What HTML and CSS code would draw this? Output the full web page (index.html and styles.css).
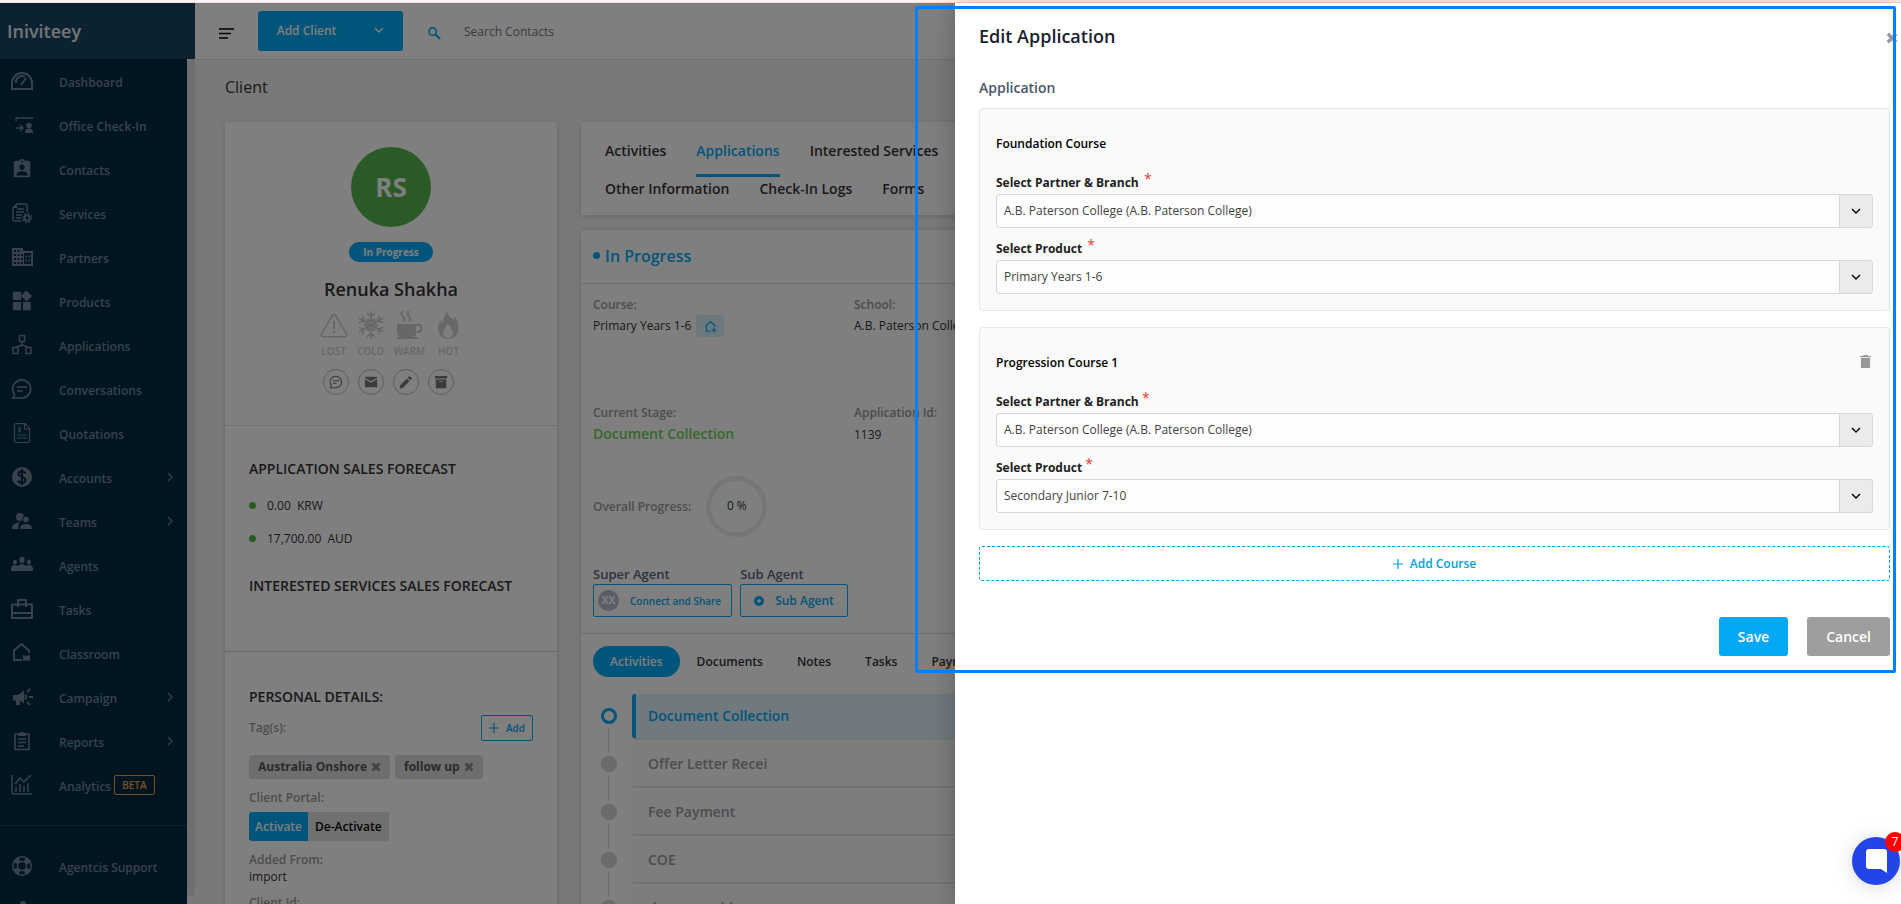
FILE: index.html
```html
<!DOCTYPE html>
<html lang="en">
<head>
  <meta charset="UTF-8">
  <title>Edit Application - Client</title>
  <meta name="viewport" content="width=device-width, initial-scale=1.0">
  <link rel="stylesheet" href="styles.css">
</head>
<body>
  <!-- icon sprite -->
  <svg class="sprite" aria-hidden="true">
    <symbol id="i-dashboard" viewBox="0 0 22 22"><path d="M1 19v-6a10 10 0 0 1 20 0v6zM5 13a6 6 0 0 1 9-6M10 15l5-7" fill="none" stroke="currentColor" stroke-width="2"/></symbol>
    <symbol id="i-checkin" viewBox="0 0 22 22"><path d="M5 7V4h17M5 14h7M9 11l3 3-3 3" fill="none" stroke="currentColor" stroke-width="1.3"/><circle cx="18" cy="11.500" r="2.700" fill="currentColor"/><path d="M14 19c0-3 1.500-4.500 4-4.500s4 1.500 4 4.500z" fill="currentColor"/></symbol>
    <symbol id="i-contacts" viewBox="0 0 24 24"><path fill="currentColor" fill-rule="evenodd" d="M19 3h-4.180C14.400 1.840 13.300 1 12 1c-1.300 0-2.400.84-2.820 2H5c-1.100 0-2 .9-2 2v14c0 1.100.9 2 2 2h14c1.100 0 2-.9 2-2V5c0-1.100-.9-2-2-2zm-7 0c.55 0 1 .45 1 1s-.45 1-1 1-1-.45-1-1 .45-1 1-1zm0 4c1.660 0 3 1.340 3 3s-1.340 3-3 3-3-1.340-3-3 1.340-3 3-3zm6 12H6v-1.400c0-2 4-3.100 6-3.100s6 1.100 6 3.100V19z"/></symbol>
    <symbol id="i-services" viewBox="0 0 22 22"><path d="M10 19H4q-2 0-2-2V6l4-4h8q2 0 2 2v6M5 10h8M5 13h6M5 16h5M6 7h7" fill="none" stroke="currentColor" stroke-width="1.500"/><path d="M2 6l4-4v4z" fill="currentColor"/><circle cx="16" cy="16" r="2.600" fill="none" stroke="currentColor" stroke-width="1.800"/><circle cx="16" cy="16" r="4.400" fill="none" stroke="currentColor" stroke-width="1.600" stroke-dasharray="1.700 1.750"/></symbol>
    <symbol id="i-partners" viewBox="0 0 22 22"><path fill="currentColor" fill-rule="evenodd" d="M1 2h11v3h10v15H1zM3 4v2h2V4zm3.500 0v2h2V4zM3 8v2h2V8zm3.500 0v2h2V8zM3 12v2h2v-2zm3.500 0v2h2v-2zM3 16v2h2v-2zm3.500 0v2h2v-2zM10 8v2h2V8zm0 4v2h2v-2zm0 4v2h2v-2zM13 7v11h7V7zm1.500 2.500h1.500v2h-1.500zm0 4h1.500v2h-1.500zm3-4h1.500v2h-1.500zm0 4h1.500v2h-1.500z"/></symbol>
    <symbol id="i-products" viewBox="0 0 24 24"><path fill="currentColor" d="M13 13v9h8.500v-9zM2 22h9v-9H2zM2 2v9h9V2zm14.500-1.500L11 6.500l6 6 6-6z"/></symbol>
    <symbol id="i-applications" viewBox="0 0 22 22"><path d="M8.500 1.500h5v6h-5zM2 13.500h5v6H2zM15 13.500h5v6h-5zM11 7.500v4.500M4.500 13.500L11 11l6.500 2.500" fill="none" stroke="currentColor" stroke-width="1.500" stroke-linejoin="round"/></symbol>
    <symbol id="i-chat" viewBox="0 0 22 22"><path d="M2 20l1.500-3.500A9 9 0 1 1 11 20zM6 9h10M6 13h6" fill="none" stroke="currentColor" stroke-width="1.700"/></symbol>
    <symbol id="i-quotation" viewBox="0 0 22 22"><path d="M5 1.700h9l4.500 4.500V19q0 1.500-1.500 1.500H5q-1.500 0-1.500-1.500V3.200q0-1.500 1.500-1.500zM13.500 2v5h5M6 13h10M6 16h10" fill="none" stroke="currentColor" stroke-width="1.200"/><path d="M10 6Q7 5 7.300 6.800T10 8.500Q9.500 10.500 7 9.500M8.700 4.800v6" fill="none" stroke="currentColor" stroke-width=".9"/></symbol>
    <symbol id="i-accounts" viewBox="0 0 22 22"><circle cx="11" cy="11" r="10" fill="currentColor"/><path d="M14.500 7.500C13 4.500 7.500 5 7.500 8s7 2.500 7 6-6 3.700-7.300.5M11 3v16" fill="none" stroke="#022b42" stroke-width="2"/></symbol>
    <symbol id="i-teams" viewBox="0 0 22 22"><g fill="currentColor"><circle cx="9" cy="7" r="4"/><path d="M1 19v-2q1-4 8-5-2 2-1.500 7z"/><circle cx="15" cy="9.500" r="3.400" stroke="#022b42"/><path d="M9 19q0-5 6-5t6 5z"/></g></symbol>
    <symbol id="i-agents" viewBox="0 0 22 22"><g fill="currentColor"><ellipse cx="11" cy="6" rx="2.600" ry="3.200"/><ellipse cx="4" cy="8" rx="2" ry="2.600"/><ellipse cx="18" cy="8" rx="2" ry="2.600"/><path d="M0 17v-3q1-3 4-3 2 0 3 1 2-2 4-2t4 2q1-1 3-1 3 0 4 3v3z"/></g></symbol>
    <symbol id="i-tasks" viewBox="0 0 22 22"><path d="M1 6.500h20V20H1zM1 15h20M7 9V2h8v7" fill="none" stroke="currentColor" stroke-width="2" stroke-linejoin="round"/></symbol>
    <symbol id="i-classroom" viewBox="0 0 22 22"><path d="M11 18H3V8.500L10.500 2 18 8.500V11" fill="none" stroke="currentColor" stroke-width="1.800"/><path d="M12 13l3.500 1 3.500-1v5.500H12z" fill="currentColor"/></symbol>
    <symbol id="i-campaign" viewBox="0 0 22 22"><path d="M2 9h5l6-4.500v13L9 14.500V19H5v-4.500H2z" fill="currentColor"/><path d="M14 8.500q2 2.500 0 5M16 6l3-3M18 11h4M16 16l3 3" fill="none" stroke="currentColor" stroke-width="1.800"/></symbol>
    <symbol id="i-reports" viewBox="0 0 22 22"><path d="M4 4h14v15.500H4zM7 9h8M7 12.500h8M7 16h6" fill="none" stroke="currentColor" stroke-width="1.600" stroke-linejoin="round"/><path d="M7 3h2q2-3 4 0h2v3H7z" fill="currentColor"/></symbol>
    <symbol id="i-analytics" viewBox="0 0 22 22"><path d="M1 1v17q0 2 2 2h18M5 18v-5M9 18v-8M13 18v-6M17 18V9M4 10l5-6 4 4 7-7" fill="none" stroke="currentColor" stroke-width="1.500"/></symbol>
    <symbol id="i-support" viewBox="0 0 22 22"><circle cx="11" cy="11" r="7" fill="none" stroke="currentColor" stroke-width="5.500" stroke-dasharray="5.500 5.500" stroke-dashoffset="-2.700"/><g fill="none" stroke="currentColor" stroke-width="1.500"><circle cx="11" cy="11" r="9.200"/><circle cx="11" cy="11" r="4.600"/></g></symbol>
    <symbol id="i-bell" viewBox="0 0 22 22"><path d="M9 5q0-3 3-3t3 3q4 2 4 7v5H5v-5q0-5 4-7z" fill="currentColor"/></symbol>
    <symbol id="i-caret" viewBox="0 0 10 10"><path d="M1 3l4 4 4-4" fill="none" stroke="currentColor" stroke-width="1.400"/></symbol>
    <symbol id="i-right" viewBox="0 0 10 10"><path d="M3 1l4 4-4 4" fill="none" stroke="currentColor" stroke-width="1.200"/></symbol>
    <symbol id="i-close" viewBox="0 0 10 10"><path d="M1.500 1.500l7 7M8.500 1.500l-7 7" stroke="currentColor" stroke-width="2.800"/></symbol>
    <symbol id="i-plus" viewBox="0 0 10 10"><path d="M5 0v10M0 5h10" stroke="currentColor" stroke-width="1.200"/></symbol>
    <symbol id="i-home-plus" viewBox="0 0 22 22"><path d="M11 19H4V9l7-6 7 6v3" fill="none" stroke="currentColor" stroke-width="2"/><path d="M17 13v8M13 17h8" stroke="currentColor" stroke-width="2"/></symbol>
  </svg>

  <div class="notice"></div>

  <div class="app">
    <!-- sidebar -->
    <aside class="sidebar">
      <div class="brand">Iniviteey</div>
      <div class="sidebar-body">
        <nav class="nav">
          <a href="#"><svg><use href="#i-dashboard"/></svg>Dashboard</a>
          <a href="#"><svg><use href="#i-checkin"/></svg>Office Check-In</a>
          <a href="#"><svg><use href="#i-contacts"/></svg>Contacts</a>
          <a href="#"><svg><use href="#i-services"/></svg>Services</a>
          <a href="#"><svg><use href="#i-partners"/></svg>Partners</a>
          <a href="#"><svg><use href="#i-products"/></svg>Products</a>
          <a href="#"><svg><use href="#i-applications"/></svg>Applications</a>
          <a href="#"><svg><use href="#i-chat"/></svg>Conversations</a>
          <a href="#"><svg><use href="#i-quotation"/></svg>Quotations</a>
          <a href="#"><svg><use href="#i-accounts"/></svg>Accounts<svg class="more"><use href="#i-right"/></svg></a>
          <a href="#"><svg><use href="#i-teams"/></svg>Teams<svg class="more"><use href="#i-right"/></svg></a>
          <a href="#"><svg><use href="#i-agents"/></svg>Agents</a>
          <a href="#"><svg><use href="#i-tasks"/></svg>Tasks</a>
          <a href="#"><svg><use href="#i-classroom"/></svg>Classroom</a>
          <a href="#"><svg><use href="#i-campaign"/></svg>Campaign<svg class="more"><use href="#i-right"/></svg></a>
          <a href="#"><svg><use href="#i-reports"/></svg>Reports<svg class="more"><use href="#i-right"/></svg></a>
          <a href="#"><svg><use href="#i-analytics"/></svg>Analytics<span class="beta">BETA</span></a>
          <hr>
          <a href="#"><svg><use href="#i-support"/></svg>Agentcis Support</a>
          <a href="#" aria-label="Notifications"><svg><use href="#i-bell"/></svg></a>
        </nav>
        <div class="scrollbar"><div class="scrollbar-thumb"></div></div>
      </div>
    </aside>

    <!-- main -->
    <main class="main">
      <header class="topbar">
        <button type="button" class="menu-btn" aria-label="Menu">
          <svg viewBox="0 0 15 11"><path d="M0 1h15M0 5.500h12M0 10h9" stroke="#000" stroke-width="1.600"/></svg>
        </button>
        <button type="button" class="add-client">Add Client <svg><use href="#i-caret"/></svg></button>
        <label class="search">
          <svg viewBox="0 0 14 14"><circle cx="5" cy="5" r="4" fill="none" stroke="currentColor" stroke-width="1.800"/><path d="M8 8l5 5" stroke="currentColor" stroke-width="2.200"/></svg>
          <input type="text" placeholder="Search Contacts" aria-label="Search Contacts">
        </label>
      </header>

      <h1 class="page-title">Client</h1>

      <div class="columns">
        <section class="card profile">
          <div class="profile-head">
            <div class="avatar">RS</div>
            <span class="status">In Progress</span>
            <h2>Renuka Shakha</h2>
            <div class="ratings">
              <div><svg viewBox="0 0 28 28"><path d="M14 3.500q1 0 1.600 1L26.500 23q1 2.700-1.500 2.700H3Q.5 25.700 1.500 23L12.400 4.500q.6-1 1.600-1z" fill="none" stroke="currentColor" stroke-width="1.600"/><path d="M14 10v8M14 20v2" stroke="currentColor" stroke-width="2"/></svg>LOST</div>
              <div><svg viewBox="0 0 28 28"><g id="arm" fill="none" stroke="currentColor" stroke-width="1.700"><path d="M14 0v28M10 2l4 4 4-4M10 26l4-4 4 4M11 8l3 3 3-3M11 20l3-3 3 3"/></g><use href="#arm" transform="rotate(60 14 14)"/><use href="#arm" transform="rotate(120 14 14)"/></svg>COLD</div>
              <div><svg viewBox="0 0 28 28"><path d="M2 13h19v9q0 4-4 4H7q-5 0-5-5zM1 26h22v2H3z" fill="currentColor"/><path d="M21 14h2q3.500 0 3.500 3.500T22 21M8 0q-3 3 0 5.500T8 10M14 0q-3 3 0 5.500T14 10" fill="none" stroke="currentColor" stroke-width="2.200"/></svg>WARM</div>
              <div><svg viewBox="0 0 28 28"><path fill="currentColor" fill-rule="evenodd" d="M13 0q0 5 7 9l1-4q4 8 3 15-2 8-10 8T4 19q0-7 3-10l1 4Q9 7 13 0zM14 13q-6 7-5 11 2 3 5 3t5-3q1-4-5-11z"/></svg>HOT</div>
            </div>
            <div class="actions">
              <button type="button" aria-label="Message"><svg><use href="#i-chat"/></svg></button>
              <button type="button" aria-label="Email"><svg viewBox="0 0 16 16"><path d="M1 2h14v12H1z" fill="currentColor"/><path d="M1 4l7 4 7-4" fill="none" stroke="#fff" stroke-width="1.300"/></svg></button>
              <button type="button" aria-label="Edit"><svg viewBox="0 0 16 16"><path d="M1 12v3h3l8-8-3-3zM10 3l3 3 2-2-3-3z" fill="currentColor"/></svg></button>
              <button type="button" aria-label="Archive"><svg viewBox="0 0 16 16"><path d="M1 1h14v3H1zM2 5h12v10H2zM6 7v1h4V7z" fill="currentColor" fill-rule="evenodd"/></svg></button>
            </div>
          </div>

          <div class="forecast">
            <h3>APPLICATION SALES FORECAST</h3>
            <ul>
              <li>0.00 &nbsp;KRW</li>
              <li>17,700.00 &nbsp;AUD</li>
            </ul>
            <h3>INTERESTED SERVICES SALES FORECAST</h3>
          </div>

          <div class="personal">
            <h3>PERSONAL DETAILS:</h3>
            <div class="tags-head">
              <span class="muted">Tag(s):</span>
              <button type="button" class="add-tag"><svg><use href="#i-plus"/></svg>Add</button>
            </div>
            <div class="tags">
              <span>Australia Onshore <svg><use href="#i-close"/></svg></span>
              <span>follow up <svg><use href="#i-close"/></svg></span>
            </div>
            <div class="muted">Client Portal:</div>
            <div class="portal">
              <button type="button" class="on">Activate</button><button type="button">De-Activate</button>
            </div>
            <div class="muted">Added From:</div>
            <div class="value">import</div>
            <div class="muted client-id">Client Id:</div>
          </div>
        </section>

        <div class="detail">
          <nav class="card tabs">
            <div class="tabs-row">
              <a href="#">Activities</a>
              <a href="#" class="active">Applications</a>
              <a href="#">Interested Services</a>
            </div>
            <div class="tabs-row">
              <a href="#">Other Information</a>
              <a href="#">Check-In Logs</a>
              <a href="#">Forms</a>
            </div>
          </nav>

          <section class="card application">
            <h2 class="app-status">In Progress</h2>
            <div class="app-body">
              <div class="facts">
                <div>
                  <div class="muted">Course:</div>
                  <div class="course">Primary Years 1-6 <span class="course-tag"><svg><use href="#i-home-plus"/></svg></span></div>
                </div>
                <div>
                  <div class="muted">School:</div>
                  <div class="course">A.B. Paterson College</div>
                </div>
                <div>
                  <div class="muted">Current Stage:</div>
                  <div class="stage-name">Document Collection</div>
                </div>
                <div>
                  <div class="muted">Application Id:</div>
                  <div class="app-id">1139</div>
                </div>
              </div>
              <div class="progress">
                <span class="muted">Overall Progress:</span>
                <div class="ring">0 %</div>
              </div>
              <div class="agents">
                <div>
                  <h4>Super Agent</h4>
                  <button type="button" class="connect"><span class="xx">XX</span>Connect and Share</button>
                </div>
                <div>
                  <h4>Sub Agent</h4>
                  <button type="button" class="sub"><svg viewBox="0 0 10 10"><circle cx="5" cy="5" r="5" fill="currentColor"/><path d="M5 3v4M3 5h4" stroke="#fff" stroke-width="1.300"/></svg>Sub Agent</button>
                </div>
              </div>
            </div>
            <nav class="pills">
              <a href="#" class="active">Activities</a>
              <a href="#">Documents</a>
              <a href="#">Notes</a>
              <a href="#">Tasks</a>
              <a href="#">Payments</a>
            </nav>
            <ol class="stages">
              <li class="current"><span>Document Collection</span></li>
              <li><span>Offer Letter Recei</span></li>
              <li><span>Fee Payment</span></li>
              <li><span>COE</span></li>
              <li><span>document bl</span></li>
            </ol>
          </section>
        </div>
      </div>
    </main>

    <div class="backdrop"></div>

    <!-- edit drawer -->
    <div class="drawer" role="dialog" aria-labelledby="drawerTitle">
      <div class="drawer-head">
        <h2 id="drawerTitle">Edit Application</h2>
        <button type="button" class="drawer-close" aria-label="Close"><svg><use href="#i-close"/></svg></button>
      </div>
      <form>
        <h3>Application</h3>

        <fieldset class="course-box">
          <div class="course-title">Foundation Course</div>
          <div class="field">
            <label for="partner1">Select Partner &amp; Branch <span class="req wide">*</span></label>
            <div class="select">
              <select id="partner1"><option>A.B. Paterson College (A.B. Paterson College)</option></select>
              <span class="arrow"><svg><use href="#i-caret"/></svg></span>
            </div>
          </div>
          <div class="field">
            <label for="product1">Select Product <span class="req wide">*</span></label>
            <div class="select">
              <select id="product1"><option>Primary Years 1-6</option></select>
              <span class="arrow"><svg><use href="#i-caret"/></svg></span>
            </div>
          </div>
        </fieldset>

        <fieldset class="course-box">
          <div class="course-title">Progression Course 1
            <button type="button" class="delete" aria-label="Delete"><svg viewBox="0 0 12 14"><path d="M1 3h10v10q0 1-1 1H2q-1 0-1-1zM0 1h3l1-1h4l1 1h3v1H0z" fill="currentColor"/></svg></button>
          </div>
          <div class="field">
            <label for="partner2">Select Partner &amp; Branch <span class="req">*</span></label>
            <div class="select">
              <select id="partner2"><option>A.B. Paterson College (A.B. Paterson College)</option></select>
              <span class="arrow"><svg><use href="#i-caret"/></svg></span>
            </div>
          </div>
          <div class="field">
            <label for="product2">Select Product <span class="req">*</span></label>
            <div class="select">
              <select id="product2"><option>Secondary Junior 7-10</option></select>
              <span class="arrow"><svg><use href="#i-caret"/></svg></span>
            </div>
          </div>
        </fieldset>

        <button type="button" class="add-course"><svg><use href="#i-plus"/></svg>Add Course</button>

        <div class="form-actions">
          <button type="submit" class="save">Save</button>
          <button type="button" class="cancel">Cancel</button>
        </div>
      </form>
      <div class="focus-frame"></div>
    </div>

    <button type="button" class="chat-btn" aria-label="Open chat">
      <svg viewBox="0 0 21 24"><path d="M3 0h15q3 0 3 3v21l-6-4H3q-3 0-3-3V3q0-3 3-3z" fill="#fff"/></svg>
      <span class="chat-count">7</span>
    </button>
  </div>
</body>
</html>
```
FILE: styles.css
```css
*, *::before, *::after {
  box-sizing: border-box;
}
body {
  margin: 0;
  height: 100vh;
  overflow: hidden;
  display: flex;
  flex-direction: column;
  font-family: "Open Sans", "Noto Sans", sans-serif;
  font-size: 12px;
  line-height: 16px;
  color: #333;
  background: #f3f3f3;
}
h1, h2, h3, h4, ul, ol {
  margin: 0;
  padding: 0;
  list-style: none;
}
h1, h2, h3, h4 {
  font-weight: 600;
}
a {
  color: inherit;
  text-decoration: none;
}
button, input, select {
  font-family: inherit;
  font-size: 12px;
}
button {
  display: flex;
  align-items: center;
  justify-content: center;
  padding: 0;
  border: none;
  background: none;
  cursor: pointer;
}
svg {
  width: 10px;
  height: 10px;
  flex: none;
}
.sprite {
  position: absolute;
  width: 0;
  height: 0;
}
.notice {
  flex: none;
  height: 3px;
  background: #fdf5f3;
  border-bottom: 1px solid #f6dcdf;
}
.app {
  position: relative;
  flex: 1;
  min-height: 0;
  display: flex;
}

/* sidebar */
.sidebar {
  width: 195px;
  flex: none;
  display: flex;
  flex-direction: column;
}
.brand {
  height: 56px;
  flex: none;
  padding: 0 7px;
  background: #184460;
  color: #e6eaed;
  font-size: 18px;
  font-weight: 600;
  line-height: 56px;
}
.sidebar-body {
  flex: 1;
  min-height: 0;
  display: flex;
}
.nav {
  flex: 1;
  overflow: hidden;
  background: #022b42;
}
.nav a {
  display: flex;
  align-items: center;
  height: 44px;
  padding: 4px 0 0 11px;
  font-weight: 600;
  color: #70859a;
}
.nav svg {
  width: 22px;
  height: 22px;
  margin: 0 26px 4px 0;
}
.nav .more {
  width: 10px;
  height: 12px;
  margin: 0 12px 4px auto;
}
.nav hr {
  margin: 18px 0;
  border: none;
  border-top: 1px solid #184460;
}
.beta {
  margin: 0 0 4px 3px;
  padding: 1px 7px;
  border: 1px solid #f0a050;
  border-radius: 2px;
  color: #f0a050;
  font-size: 10px;
}
.scrollbar {
  width: 8px;
  padding-bottom: 8px;
  background: #f3f3f3;
}
.scrollbar-thumb {
  height: 100%;
  border-radius: 4px;
  background: #dcdcdc;
}

/* main */
.main {
  flex: 1;
  min-width: 0;
  overflow: hidden;
}
.topbar {
  height: 57px;
  display: flex;
  align-items: center;
  padding-left: 24px;
  background: #fff;
  border-bottom: 1px solid #e0e0e0;
}
.menu-btn {
  padding-top: 5px;
}
.menu-btn svg {
  width: 15px;
  height: 11px;
}
.add-client {
  width: 145px;
  height: 40px;
  margin: 0 25px 0 24px;
  padding-bottom: 2px;
  border-radius: 3px;
  background: #03a9f4;
  color: #fff;
  font-weight: 600;
  gap: 38px;
}
.search {
  display: flex;
  align-items: center;
  gap: 23px;
  color: #03a9f4;
}
.search svg {
  width: 13px;
  height: 13px;
  margin-top: 4px;
}
.search input {
  border: none;
  outline: none;
  padding: 0;
}
.search input::placeholder {
  color: #757575;
}
.page-title {
  padding: 15px 30px 23px;
  font-size: 16px;
  font-weight: 500;
  line-height: 24px;
  color: #333;
}
.columns {
  display: grid;
  grid-template-columns: 332px 1fr;
  gap: 24px;
  padding: 0 24px 0 30px;
}
.card {
  background: #fff;
  border-radius: 3px;
  box-shadow: 0 1px 6px rgba(0, 0, 0, 0.15);
}
.muted {
  color: #999;
  font-weight: 600;
}

/* profile card */
.profile h3 {
  font-size: 14px;
  line-height: 20px;
}
.profile-head {
  height: 304px;
  padding-top: 25px;
  display: flex;
  flex-direction: column;
  align-items: center;
  border-bottom: 1px solid #e0e0e0;
}
.avatar {
  width: 80px;
  height: 80px;
  border-radius: 50%;
  background: #55b44b;
  color: #fff;
  font-size: 26px;
  font-weight: 700;
  line-height: 80px;
  text-align: center;
}
.status {
  margin: 15px 0;
  padding: 0 14px;
  border-radius: 10px;
  background: #03a9f4;
  color: #fff;
  font-size: 10px;
  font-weight: 700;
  line-height: 20px;
}
.profile-head h2 {
  font-size: 18px;
  line-height: 24px;
}
.ratings {
  display: flex;
  gap: 9px;
  margin-top: 10px;
}
.ratings div {
  display: flex;
  flex-direction: column;
  align-items: center;
  min-width: 28px;
  color: #cfcfcf;
  font-size: 10px;
  font-weight: 600;
}
.ratings svg {
  width: 28px;
  height: 28px;
  margin-bottom: 4px;
}
.actions {
  display: flex;
  gap: 9px;
  margin: 10px 5px 0 0;
}
.actions button {
  width: 26px;
  height: 26px;
  border: 1px solid #bbb;
  border-radius: 50%;
  color: #777;
}
.actions svg {
  width: 14px;
  height: 14px;
}
.forecast {
  height: 226px;
  padding: 33px 24px 0;
  border-bottom: 1px solid #ccc;
}
.forecast li {
  display: flex;
  align-items: center;
  gap: 11px;
  height: 33px;
}
.forecast li::before {
  content: "";
  width: 7px;
  height: 7px;
  border-radius: 50%;
  background: #55b44b;
}
.forecast ul {
  margin: 10px 0 21px;
}
.personal {
  padding: 35px 24px;
}
.tags-head {
  display: flex;
  justify-content: space-between;
  align-items: center;
  margin-top: 8px;
}
.add-tag {
  width: 52px;
  height: 26px;
  gap: 7px;
  border: 1px solid #03a9f4;
  border-radius: 2px;
  color: #03a9f4;
  font-size: 10px;
  font-weight: 600;
}
.tags {
  display: flex;
  gap: 5px;
  margin: 14px 0 11px;
}
.tags span {
  display: flex;
  align-items: center;
  gap: 4px;
  height: 24px;
  padding: 0 9px;
  border-radius: 3px;
  background: #ddd;
  color: #555;
  font-weight: 700;
}
.tags svg {
  color: #888;
}
.portal {
  display: flex;
  margin: 6px 0 11px;
}
.portal button {
  height: 29px;
  padding: 0 7px;
  border-radius: 0 3px 3px 0;
  background: #e0e0e0;
  font-weight: 600;
  color: #000;
}
.portal .on {
  padding: 0 6px;
  border-radius: 3px 0 0 3px;
  background: #03a9f4;
  color: #fff;
}
.value {
  padding-top: 1px;
}
.client-id {
  margin-top: 10px;
}

/* detail column */
.tabs {
  height: 93px;
  padding: 16px 24px 0;
  margin-bottom: 15px;
  border-radius: 0;
}
.tabs-row {
  display: flex;
  gap: 30px;
  height: 38px;
  font-size: 14px;
  font-weight: 600;
  line-height: 26px;
}
.tabs .active {
  height: 39px;
  border-bottom: 3px solid #03a9f4;
  color: #03a9f4;
}
.app-status {
  display: flex;
  align-items: center;
  gap: 5px;
  height: 54px;
  padding: 0 12px 2px;
  border-bottom: 1px solid #ddd;
  font-size: 16px;
  color: #03a9f4;
}
.app-status::before {
  content: "";
  width: 7px;
  height: 7px;
  border-radius: 50%;
  background: #03a9f4;
}
.app-body {
  height: 350px;
  padding: 13px 12px 0;
  border-bottom: 1px solid #ddd;
}
.facts {
  display: grid;
  grid-template-columns: 261px 1fr;
  grid-auto-rows: 108px;
}
.course {
  display: flex;
  align-items: center;
  gap: 5px;
  height: 26px;
}
.course-tag {
  width: 28px;
  height: 22px;
  display: flex;
  align-items: center;
  justify-content: center;
  border-radius: 3px;
  background: #d6f0fc;
  color: #03a9f4;
}
.course-tag svg {
  width: 13px;
  height: 13px;
}
.stage-name {
  margin-top: 5px;
  font-size: 14px;
  font-weight: 600;
  color: #6fcf54;
}
.app-id {
  margin-top: 6px;
}
.progress {
  display: flex;
  align-items: center;
  gap: 15px;
  margin-top: -37px;
}
.ring {
  width: 61px;
  height: 61px;
  border: 5px solid #ededed;
  border-radius: 50%;
  line-height: 50px;
  text-align: center;
}
.agents {
  display: flex;
  gap: 8px;
  margin-top: 28px;
}
.agents h4 {
  padding-bottom: 1px;
  font-size: 13px;
  line-height: 18px;
  color: #56677a;
}
.agents button {
  height: 33px;
  border: 1px solid #03a9f4;
  border-radius: 2px;
  color: #03a9f4;
  font-weight: 600;
  gap: 11px;
}
.agents .connect {
  padding: 0 10px 0 4px;
  font-size: 10px;
}
.agents .sub {
  padding: 0 13px;
}
.xx {
  width: 21px;
  height: 21px;
  border-radius: 50%;
  background: #b5bdcc;
  color: #fff;
  font-weight: 700;
  line-height: 21px;
}
.pills {
  display: flex;
  align-items: center;
  margin: 12px 12px 15px;
  height: 31px;
  font-weight: 600;
}
.pills a {
  padding: 0 17px;
  line-height: 31px;
}
.pills .active {
  border-radius: 16px;
  background: #03a9f4;
  color: #fff;
}
.stages li {
  display: grid;
  grid-template-columns: 16px 1fr;
  gap: 15px;
  align-items: center;
  position: relative;
  height: 48px;
  padding-left: 20px;
  font-size: 14px;
  font-weight: 600;
  color: #999;
}
.stages li::before {
  content: "";
  width: 16px;
  height: 16px;
  border-radius: 50%;
  background: #d6d6d6;
}
.stages li::after {
  content: "";
  position: absolute;
  left: 27px;
  top: 36px;
  width: 1px;
  height: 24px;
  background: #d6d6d6;
}
.stages span {
  height: 44px;
  padding-left: 16px;
  line-height: 44px;
  border-radius: 3px;
  background: #fafafa;
  box-shadow: 0 2px 1px rgba(0, 0, 0, 0.1);
}
.stages .current {
  color: #03a9f4;
}
.stages .current::before {
  border: 3px solid #03a9f4;
  background: #fff;
}
.stages .current span {
  padding-left: 12px;
  border-left: 4px solid #03a9f4;
  background: #e1f3fd;
}

.backdrop {
  position: absolute;
  inset: 0;
  background: rgba(0, 0, 0, 0.5);
}

/* edit drawer */
.drawer {
  position: absolute;
  top: 0;
  bottom: 0;
  left: 955px;
  right: 0;
  padding: 0 11px 0 24px;
  background: #fff;
  box-shadow: 0 0 24px rgba(0, 0, 0, 0.25);
}
.drawer-head {
  display: flex;
  align-items: center;
  justify-content: space-between;
  height: 66px;
  margin-right: -8px;
}
.drawer-head h2 {
  font-size: 18px;
  color: #1a202c;
}
.drawer-close {
  padding-top: 4px;
  color: #999;
}
.drawer-close svg {
  width: 12px;
  height: 12px;
}
.drawer h3 {
  padding: 7px 0 8px;
  font-size: 14px;
  line-height: 24px;
  color: #4a5568;
}
.course-box {
  height: 203px;
  margin: 0 0 16px;
  padding: 26px 16px 0;
  border: 1px solid #e2e8f0;
  border-radius: 4px;
  background: #fafafa;
}
.course-title {
  display: flex;
  align-items: center;
  justify-content: space-between;
  height: 18px;
  margin-bottom: 20px;
  font-weight: 600;
  color: #000;
}
.delete {
  padding: 0 2px 3px 0;
  color: #999;
}
.delete svg {
  width: 11px;
  height: 13px;
}
.field {
  margin-bottom: 11px;
}
.field label {
  display: block;
  height: 21px;
  font-weight: 700;
  line-height: 16px;
  color: #212121;
}
.req {
  color: #e53935;
  font-size: 14px;
  font-weight: 400;
  line-height: 12px;
  vertical-align: 3px;
}
.req.wide {
  margin-left: 2px;
}
.select {
  position: relative;
}
.select select {
  display: block;
  width: 100%;
  height: 34px;
  padding: 0 42px 1px 7px;
  appearance: none;
  border: 1px solid #d8d8d8;
  border-radius: 3px;
  background: #fdfdfd;
  color: #424242;
}
.arrow {
  position: absolute;
  top: 1px;
  right: 1px;
  bottom: 1px;
  width: 33px;
  display: flex;
  align-items: center;
  justify-content: center;
  border-left: 1px solid #d8d8d8;
  border-radius: 0 2px 2px 0;
  background: #ebebeb;
  color: #000;
  pointer-events: none;
}
.add-course {
  width: 100%;
  height: 35px;
  gap: 7px;
  border: 1px dashed #03a0e0;
  border-radius: 3px;
  color: #03a0e0;
  font-weight: 600;
}
.form-actions {
  display: flex;
  justify-content: flex-end;
  gap: 19px;
  margin-top: 36px;
}
.form-actions button {
  height: 39px;
  padding: 0 19px 1px;
  border-radius: 3px;
  color: #fff;
  font-size: 14px;
  font-weight: 600;
}
.save {
  background: #03a9f4;
}
.cancel {
  background: #9e9e9e;
}
.focus-frame {
  position: absolute;
  top: 3px;
  left: -40px;
  right: 5px;
  height: 667px;
  border: 3px solid #007fff;
  border-radius: 2px;
  pointer-events: none;
}

/* chat launcher */
.chat-btn {
  position: absolute;
  right: 1px;
  bottom: 19px;
  width: 48px;
  height: 48px;
  border-radius: 50%;
  background: #2244e8;
  box-shadow: 0 2px 20px rgba(0, 0, 0, 0.15);
}
.chat-btn svg {
  width: 21px;
  height: 24px;
}
.chat-count {
  position: absolute;
  top: -5px;
  right: -5px;
  width: 20px;
  height: 20px;
  border-radius: 50%;
  background: #f00;
  color: #fff;
  font-size: 12px;
  line-height: 20px;
}
```
